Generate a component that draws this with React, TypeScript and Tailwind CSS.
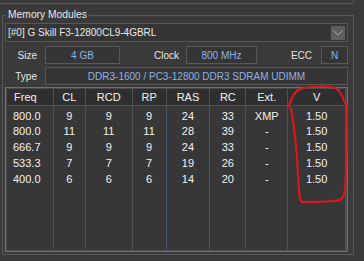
import React from "react";

const cols = [
  { name: "Freq", w: "w-[47px]", left: true },
  { name: "CL", w: "w-[32px]" },
  { name: "RCD", w: "w-[47px]" },
  { name: "RP", w: "w-[34px]" },
  { name: "RAS", w: "w-[44px]" },
  { name: "RC", w: "w-[36px]" },
  { name: "Ext.", w: "w-[42px]" },
  { name: "V", w: "w-[58px]" },
];

const rows = [
  ["800.0", "9", "9", "9", "24", "33", "XMP", "1.50"],
  ["800.0", "11", "11", "11", "28", "39", "-", "1.50"],
  ["666.7", "9", "9", "9", "24", "33", "-", "1.50"],
  ["533.3", "7", "7", "7", "19", "26", "-", "1.50"],
  ["400.0", "6", "6", "6", "14", "20", "-", "1.50"],
];

function ValueBox({ w, children }: { w: string; children: React.ReactNode }) {
  return (
    <div className={`${w} h-[18px] flex items-center justify-center border border-[#575757] bg-[#353535] text-[#8fb2e6]`}>
      {children}
    </div>
  );
}

export default function App() {
  return (
    <div
      className="relative w-[364px] h-[261px] overflow-hidden bg-[#3a3a3a] text-[10px] text-[#e4e4e4]"
      style={{ fontFamily: '"Liberation Sans", Arial, sans-serif' }}
    >
      {/* bottom edge of the panel above */}
      <div className="w-[354px] h-[4px] border-b border-r border-[#575757]" />

      {/* Memory Modules group */}
      <div className="relative ml-[2px] mt-[11px] w-[352px] h-[240px] border border-[#575757] pl-[2px] pt-[7px]">
        <span className="absolute left-[3px] -top-[8px] bg-[#3a3a3a] px-[2px] text-[10.3px] leading-[14px] text-[#e8e8e8]">
          Memory Modules
        </span>

        {/* module select */}
        <div className="w-[343px] h-[19px] flex items-center justify-between border border-[#575757] bg-[#353535] pl-[2px] pr-[2px]">
          <span className="text-[#e8e8e8]">[#0] G Skill F3-12800CL9-4GBRL</span>
          <div className="w-[14px] h-[14px] bg-[#5e5e5e] flex items-center justify-center">
            <svg width="10" height="6" viewBox="0 0 10 6">
              <path d="M0.5 0.5 L5 5 L9.5 0.5" fill="none" stroke="#a8a8a8" strokeWidth="1" />
            </svg>
          </div>
        </div>

        {/* size / clock / ecc */}
        <div className="flex items-center mt-[4px]">
          <span className="w-[32px] text-right">Size</span>
          <div className="ml-[8px]">
            <ValueBox w="w-[75px]">4 GB</ValueBox>
          </div>
          <span className="w-[59px] text-right">Clock</span>
          <div className="ml-[7px]">
            <ValueBox w="w-[71px]">800 MHz</ValueBox>
          </div>
          <span className="w-[55px] text-right">ECC</span>
          <div className="ml-[9px]">
            <ValueBox w="w-[27px]">N</ValueBox>
          </div>
        </div>

        {/* type */}
        <div className="flex items-center mt-[3px]">
          <span className="w-[32px] text-right">Type</span>
          <div className="ml-[8px]">
            <ValueBox w="w-[303px]">DDR3-1600 / PC3-12800 DDR3 SDRAM UDIMM</ValueBox>
          </div>
        </div>

        {/* timings table */}
        <div className="mt-[2px] w-[343px] h-[165px] border border-[#707070]">
          <div className="flex h-full border border-[#4a4a4a] bg-[#373737] text-[11px] text-[#f2f2f2]">
            {cols.map((c, ci) => (
              <div key={c.name} className={`${c.w} flex flex-col h-full`}>
                <div
                  className={`h-[17px] flex items-center bg-[#2f2f2f] border-b border-r border-[#505050] ${
                    c.left ? "pl-[7px]" : "justify-center"
                  }`}
                >
                  {c.name}
                </div>
                <div className="flex-1 pt-[2px] border-r border-[#4a535d]">
                  {rows.map((r, ri) => (
                    <div
                      key={ri}
                      className={`h-[15.75px] flex items-center ${c.left ? "pl-[6px]" : "justify-center"}`}
                    >
                      {r[ci]}
                    </div>
                  ))}
                </div>
              </div>
            ))}
          </div>
        </div>
      </div>

      {/* red hand-drawn mark over V column */}
      <svg className="absolute inset-0 pointer-events-none" width="364" height="261">
        <path
          d="M289 106 C291 99 294 92 300 89 C306 87 320 86 332 87 C339 88 342 94 344 101 L347 106 C347 130 347 165 345 190 C344 196 343 199 340 200 C330 202 312 202 302 202 C299 200 299 190 298 175 C297 150 294 125 291 108"
          fill="none"
          stroke="#e5141c"
          strokeWidth="2"
          strokeLinecap="round"
          strokeLinejoin="round"
        />
      </svg>
    </div>
  );
}
